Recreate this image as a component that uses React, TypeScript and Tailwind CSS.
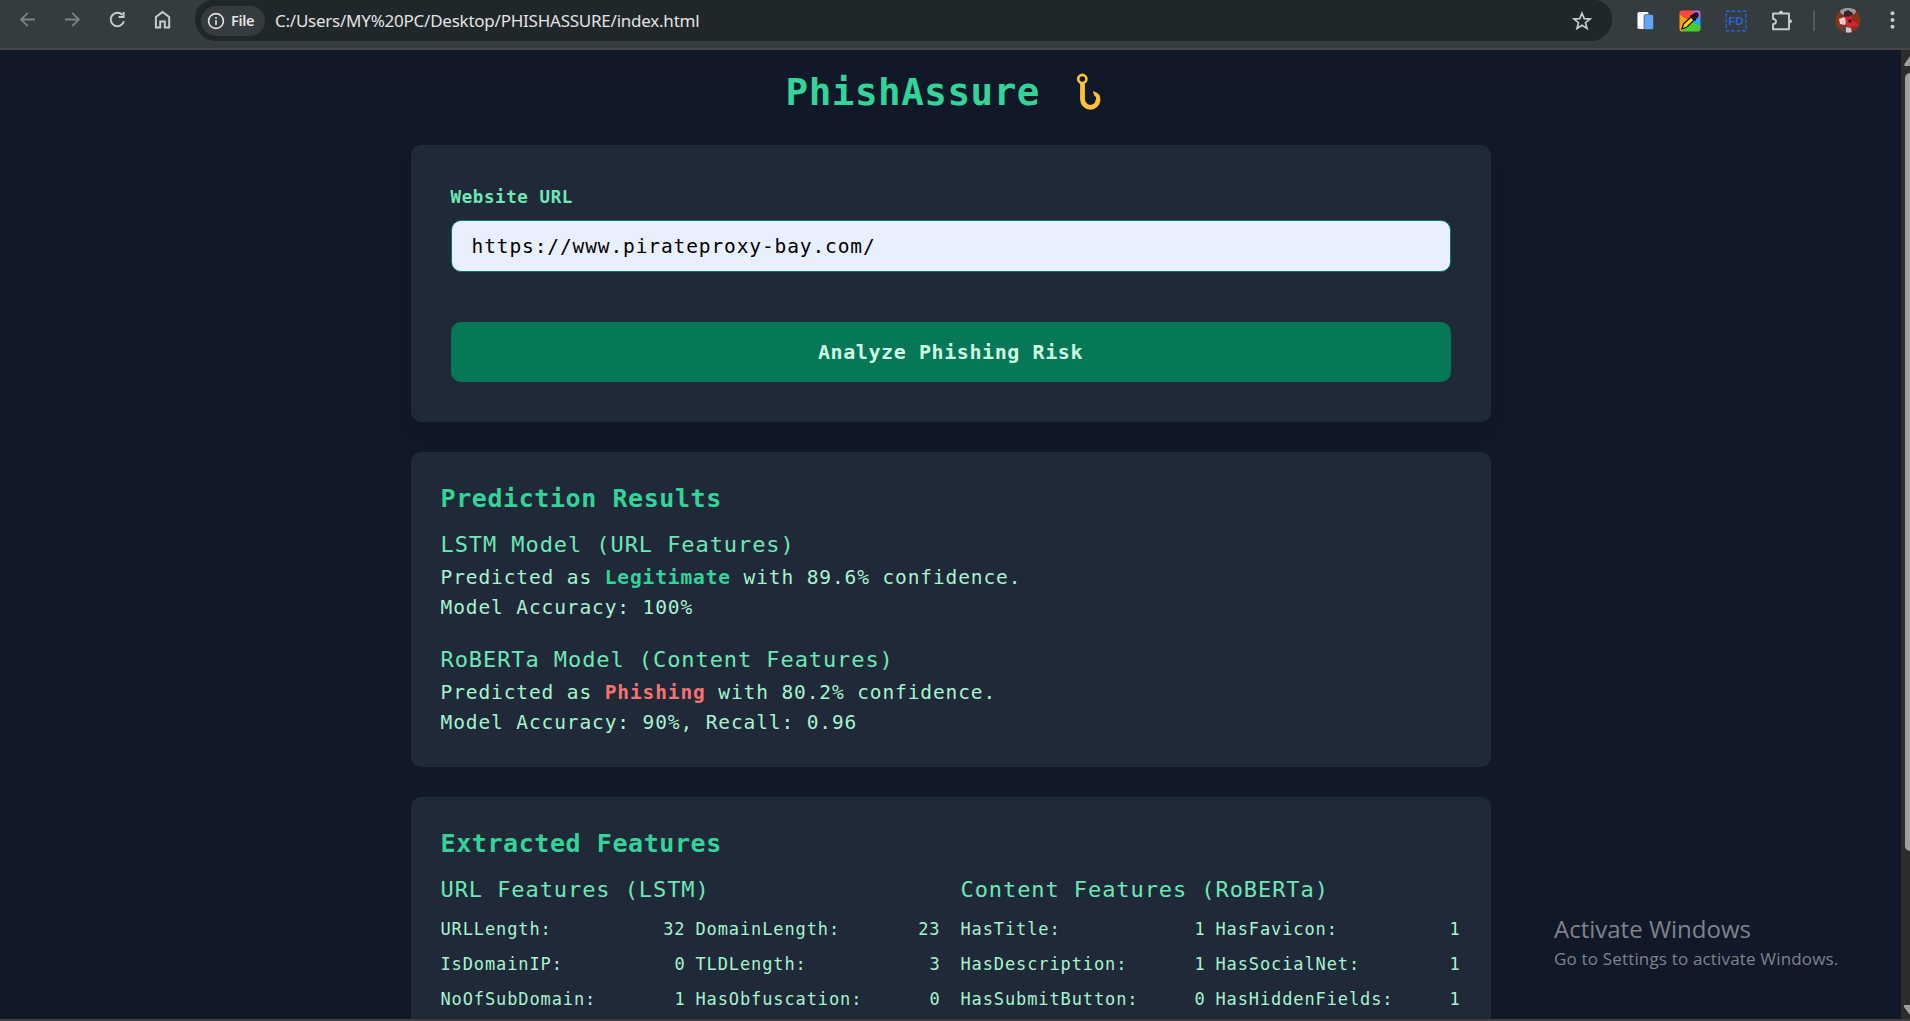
import React from "react";

const urlFeatures: [string, string][] = [
  ["URLLength:", "32"], ["DomainLength:", "23"],
  ["IsDomainIP:", "0"], ["TLDLength:", "3"],
  ["NoOfSubDomain:", "1"], ["HasObfuscation:", "0"],
];
const contentFeatures: [string, string][] = [
  ["HasTitle:", "1"], ["HasFavicon:", "1"],
  ["HasDescription:", "1"], ["HasSocialNet:", "1"],
  ["HasSubmitButton:", "0"], ["HasHiddenFields:", "1"],
];

function NavIcons() {
  return (
    <div className="flex h-[40px] items-center gap-[23px] pl-[16px]">
      <svg width="22" height="22" viewBox="0 0 22 22" fill="none" stroke="#7b8283" strokeWidth="1.8">
        <path d="M19 10.5H5M11.8 3.8L5 10.5L11.8 17.2" />
      </svg>
      <svg width="22" height="22" viewBox="0 0 22 22" fill="none" stroke="#7b8283" strokeWidth="1.8">
        <path d="M4 10.5H18M11.2 3.8L18 10.5L11.2 17.2" />
      </svg>
      <svg width="22" height="22" viewBox="0 0 22 22" fill="none" stroke="#c7cccc" strokeWidth="2">
        <path d="M17.9 12.2A6.7 6.7 0 1 1 16.2 5.8M17.6 3V8H12.6" />
      </svg>
      <svg width="22" height="22" viewBox="0 0 22 22" fill="none" stroke="#c7cccc" strokeWidth="2">
        <path d="M4.9 8L11.5 3L18.2 8V18.5H13.8V12.5H9.2V18.5H4.9Z" />
      </svg>
    </div>
  );
}

function Extensions() {
  return (
    <div className="flex h-[41px] items-center">
      <svg className="ml-[22px]" width="22" height="22" viewBox="0 0 22 22">
        <rect x="3.5" y="2" width="11" height="17" rx="1.5" fill="#fff" />
        <rect x="10" y="4.5" width="9.5" height="15" rx="1.5" fill="#62a5f8" stroke="#353c3f" strokeWidth="0.6" />
      </svg>
      <svg className="ml-[23px]" width="22" height="22" viewBox="0 0 22 22">
        <defs>
          <clipPath id="picker"><rect x="0.5" y="0.5" width="21" height="21" rx="2.5" /></clipPath>
        </defs>
        <g clipPath="url(#picker)">
          <path d="M11 11L0 4V0H15Z" fill="#ff4b3e" />
          <path d="M11 11L0 4V22H3Z" fill="#ff9d0a" />
          <path d="M11 11L15 0H22V7Z" fill="#c95cf0" />
          <path d="M11 11L22 7V17Z" fill="#2aa7f5" />
          <path d="M11 11L22 16V22H2Z" fill="#4ccb2f" />
        </g>
        <path d="M3 19L4.5 14L12 7L15 10L8 17Z" fill="#ffd71e" stroke="#111" strokeWidth="1.3" />
        <path d="M11 5.5L13 5L15 3Q18 1.5 19.5 3.5Q20.5 6 18 8L17 9L16.5 11.5Z" fill="#111" />
      </svg>
      <svg className="ml-[24px]" width="22" height="22" viewBox="0 0 22 22">
        <rect x="1.2" y="1.2" width="19.6" height="19.6" fill="none" stroke="#2d63d8" strokeWidth="1.4" strokeDasharray="3.4 2.2" />
        <text x="11" y="15.2" textAnchor="middle" fontFamily="Liberation Sans" fontWeight="700" fontSize="11.5" fill="#2d63d8">FD</text>
      </svg>
      <svg className="ml-[23px]" width="24" height="24" viewBox="0 0 24 24" fill="none" stroke="#c7cccc" strokeWidth="1.9" strokeLinejoin="round">
        <path d="M3 4.5H19V20.2H3V15.1Q6 14.7 6 12.4T3 9.7Z" />
        <path d="M8.8 4Q9 1.5 11 1.5T13.2 4ZM19.5 10Q22 10.3 22 12.2T19.5 14.5Z" fill="#c7cccc" stroke="none" />
      </svg>
      <div className="ml-[19px] h-[20px] w-[2px] bg-[#545b5d]" />
      <svg className="ml-[20px]" width="26" height="26" viewBox="0 0 26 26">
        <defs><clipPath id="face"><circle cx="13" cy="12.2" r="12.4" /></clipPath></defs>
        <g clipPath="url(#face)">
          <rect width="26" height="26" fill="#8a3218" />
          <path d="M5 0H21V4L18 7L13 4L8 7L5 4Z" fill="#9a9aa2" />
          <path d="M9 4L13 2L18 5L17 10H9Z" fill="#3b2226" />
          <path d="M4 11L9 9L12 12L10 17L5 16Z" fill="#ecc9ce" />
          <path d="M10 8L13 9L17 7L17 12L22 15L24 19L20 18L14 19L11 16Z" fill="#d92335" />
          <path d="M13 12L16 11L17 14L14 15Z" fill="#2a1a20" />
          <path d="M7 18L11 18L10 26H7Z" fill="#4a4550" />
          <path d="M11 19L16 20L17 26H11Z" fill="#c9cad2" />
        </g>
      </svg>
      <svg className="ml-[21px]" width="22" height="22" viewBox="0 0 22 22" fill="#c7cccc">
        <circle cx="10.5" cy="3.2" r="2" /><circle cx="10.5" cy="10" r="2" /><circle cx="10.5" cy="16.8" r="2" />
      </svg>
    </div>
  );
}

function Toolbar() {
  return (
    <header className="flex h-[50px] shrink-0 border-b-2 border-[#474747] bg-[#353c3f] font-['Noto_Sans','Open_Sans',sans-serif]">
      <NavIcons />
      <div className="ml-[22px] flex h-[41px] w-[1417px] items-center rounded-b-[21px] rounded-tl-[18px] rounded-tr-[18px] bg-[#1f272a] pl-[6px] pr-[20px]">
        <div className="flex h-[30px] w-[64px] items-center rounded-full bg-[#353c3f] pl-[6px] text-[14.5px] font-semibold text-[#e3e3e3]">
          <svg width="18" height="18" viewBox="0 0 18 18" fill="none" stroke="#e3e3e3" strokeWidth="1.6">
            <circle cx="9" cy="9" r="7.4" />
            <path d="M9 8V13M9 5V6.7" />
          </svg>
          <span className="ml-[6px] tracking-[-0.3px]">File</span>
        </div>
        <span className="ml-[10px] whitespace-nowrap text-[17px] tracking-[-0.24px] text-[#e3e3e3]">C:/Users/MY%20PC/Desktop/PHISHASSURE/index.html</span>
        <svg className="ml-auto" width="20" height="20" viewBox="0 0 20 20" fill="none" stroke="#c7cccc" strokeWidth="1.7">
          <path d="M10 2.2L12.2 7.6L18 8L13.5 11.7L15 17.4L10 14.3L5 17.4L6.5 11.7L2 8L7.8 7.6Z" />
        </svg>
      </div>
      <Extensions />
    </header>
  );
}

function Hook() {
  return (
    <svg className="ml-[36px]" width="26" height="38" viewBox="0 0 26 38" fill="none" stroke="#fbc13a">
      <circle cx="6.3" cy="6" r="4.1" strokeWidth="2.7" />
      <path d="M6.5 10V26.5A8.4 8.4 0 0 0 14.5 34.4A7.8 7.8 0 0 0 22 27" strokeWidth="4.8" />
      <path d="M16.8 18Q25.2 20 24.4 28L19.6 28.5Q21.2 24 18.3 22.5Z" fill="#fbc13a" stroke="none" />
    </svg>
  );
}

function FeatureList({ title, items }: { title: string; items: [string, string][] }) {
  return (
    <div>
      <h3 className="mb-[10px] text-[22px] leading-[35px] tracking-[0.92px] text-[#6ee7b7]">{title}</h3>
      <div className="grid grid-cols-2 gap-[10px] text-[17px] leading-[25px] tracking-[0.89px]">
        {items.map(([name, value]) => (
          <div key={name} className="flex justify-between">
            <span>{name}</span>
            <span>{value}</span>
          </div>
        ))}
      </div>
    </div>
  );
}

export default function App() {
  return (
    <div className="flex h-[1021px] w-[1910px] flex-col overflow-hidden bg-[#111827]">
      <Toolbar />
      <div className="relative flex h-[969px] overflow-hidden">
        <main className="flex w-[1901px] flex-col items-center font-['DejaVu_Sans_Mono',monospace] text-[#a7f3d0]">
          <div className="flex h-[95px] w-[1080px] shrink-0 pl-[375px] pt-[17px]">
            <h1 className="whitespace-nowrap text-[37.5px] font-bold leading-[50px] tracking-[0.55px] text-[#34d399]">PhishAssure</h1>
            <div className="pt-[6px]"><Hook /></div>
          </div>

          <section className="h-[277px] w-[1080px] shrink-0 rounded-[10px] bg-[#1f2937] px-[40px] pt-[40px] shadow-[0_12px_18px_-4px_rgba(0,0,0,0.13)]">
            <label className="block text-[17.5px] font-bold leading-[25px] tracking-[0.59px] text-[#6ee7b7]">Website URL</label>
            <div className="mt-[10px] h-[52px] rounded-[10px] border border-[#047857] bg-[#e8f0fe] px-[20px] text-[19.5px] leading-[52px] tracking-[0.886px] text-black">
              https://www.pirateproxy-bay.com/
            </div>
            <button className="mt-[50px] block h-[60px] w-full rounded-[10px] bg-[#047857] text-[20px] font-bold leading-[60px] tracking-[0.585px] text-[#d1fae5]">
              Analyze Phishing Risk
            </button>
          </section>

          <section className="mt-[30px] h-[315px] w-[1080px] shrink-0 rounded-[10px] bg-[#1f2937] px-[30px] pt-[29px] text-[19.5px] leading-[30px] tracking-[0.886px]">
            <h2 className="mb-[11px] text-[25px] font-bold leading-[35px] tracking-[0.575px] text-[#34d399]">Prediction Results</h2>
            <h3 className="mb-px text-[22px] leading-[35px] tracking-[0.92px] text-[#6ee7b7]">LSTM Model (URL Features)</h3>
            <p>Predicted as <b className="text-[#34d399]">Legitimate</b> with 89.6% confidence.</p>
            <p>Model Accuracy: 100%</p>
            <h3 className="mb-px mt-[19px] text-[22px] leading-[35px] tracking-[0.92px] text-[#6ee7b7]">RoBERTa Model (Content Features)</h3>
            <p>Predicted as <b className="text-[#f87171]">Phishing</b> with 80.2% confidence.</p>
            <p>Model Accuracy: 90%, Recall: 0.96</p>
          </section>

          <section className="mt-[30px] h-[400px] w-[1080px] shrink-0 rounded-[10px] bg-[#1f2937] px-[30px] pt-[29px]">
            <h2 className="mb-[11px] text-[25px] font-bold leading-[35px] tracking-[0.575px] text-[#34d399]">Extracted Features</h2>
            <div className="grid grid-cols-2 gap-[20px]">
              <FeatureList title="URL Features (LSTM)" items={urlFeatures} />
              <FeatureList title="Content Features (RoBERTa)" items={contentFeatures} />
            </div>
          </section>
        </main>

        <aside className="flex w-[9px] flex-col items-end overflow-hidden bg-[#2c2c2c]">
          <svg className="mt-[6px] shrink-0" width="6" height="11" viewBox="0 0 6 11"><path d="M6 0L0.5 8V10H6Z" fill="#9f9f9f" /></svg>
          <div className="mt-[6px] h-[778px] w-[5px] shrink-0 rounded-l-[5px] bg-[#9f9f9f]" />
          <svg className="mt-auto mb-[3px] shrink-0" width="6" height="11" viewBox="0 0 6 11"><path d="M0 0H6V10L0 2Z" fill="#9f9f9f" /></svg>
        </aside>

        <div className="absolute left-[1554px] top-[861px] whitespace-nowrap font-['Open_Sans','Noto_Sans',sans-serif] text-[#7f838b]">
          <div className="text-[24px] leading-[36px]">Activate Windows</div>
          <div className="text-[17px] leading-[24px] tracking-[0.17px]">Go to Settings to activate Windows.</div>
        </div>
      </div>
      <div className="h-[2px] shrink-0 bg-[#404040]" />
    </div>
  );
}
